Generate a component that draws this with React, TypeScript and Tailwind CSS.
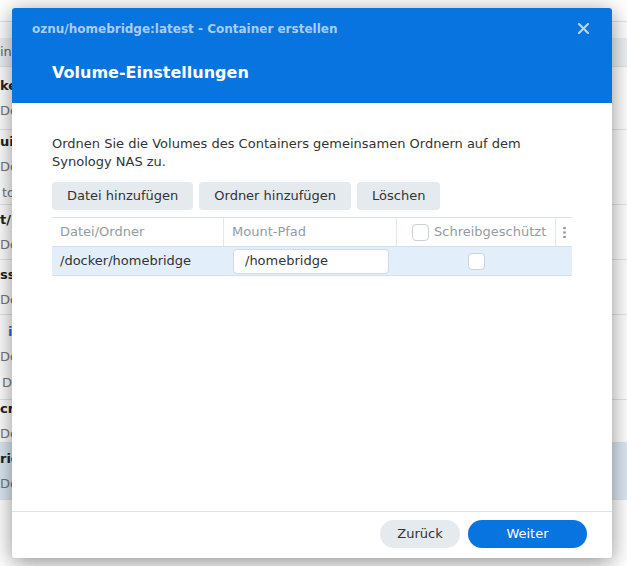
import React from 'react';

// Background list rows peeking out from behind the dialog
const BG_ROWS = [
  { h: 'h-[63px]', title: 'ke', subs: ['Do'], selected: false },
  { h: 'h-[75px]', title: 'ui', subs: ['Do', 'to'], selected: false },
  { h: 'h-[55px]', title: 't/', subs: ['Do'], selected: false },
  { h: 'h-[55px]', title: 'ss', subs: ['Do'], selected: false },
  { h: 'h-[85px]', title: 'i', subs: ['Do', 'D'], selected: false, blue: true },
  { h: 'h-[43px]', title: 'cr', subs: ['Do'], selected: false },
  { h: 'h-[57px]', title: 'rid', subs: ['Do'], selected: true },
];

function Checkbox() {
  return <span className="inline-block h-[17px] w-[17px] rounded-[4px] border border-[#c9d2da] bg-white" />;
}

export default function App() {
  return (
    <div className="relative h-[566px] w-[627px] overflow-hidden bg-white font-['DejaVu_Sans',sans-serif] text-[13px] text-[#333]">
      {/* Background window */}
      <div className="flex flex-col">
        <div className="h-[22px] border-b border-[#dfe4e8]" />
        <div className="h-[16px]" />
        <div className="flex h-[29px] items-center border-b border-[#dfe4e8] bg-[#eef1f4]">
          <span className="text-[#666]">in</span>
        </div>
        {BG_ROWS.map((r, i) => (
          <div
            key={i}
            className={`flex flex-col justify-center gap-[6px] border-b border-[#dfe4e8] ${r.h} ${r.selected ? 'bg-[#dce8f3]' : ''}`}
          >
            <span className={`font-bold ${r.blue ? 'ml-[8px] text-[#1d6fd1]' : 'text-[#222]'}`}>{r.title}</span>
            {r.subs.map((s, j) => (
              <span key={j} className={`text-[#777] ${j === 1 ? 'ml-[2px]' : ''}`}>{s}</span>
            ))}
          </div>
        ))}
      </div>

      {/* Dialog */}
      <div className="absolute left-[12px] top-[8px] flex h-[550px] w-[600px] flex-col overflow-hidden rounded-[3px] bg-white shadow-[0_4px_22px_rgba(0,0,0,0.45)]">
        <div className="flex h-[95px] flex-col bg-[#0874e0] px-[20px]">
          <div className="flex h-[40px] items-center justify-between pt-[1px]">
            <span className="text-[12px] font-bold text-[#a8cdf4]">oznu/homebridge:latest - Container erstellen</span>
            <svg width="11" height="11" viewBox="0 0 11 11" className="mr-[3px]">
              <path d="M1 1L10 10M10 1L1 10" stroke="#b9d7f6" strokeWidth="2" strokeLinecap="round" />
            </svg>
          </div>
          <div className="flex h-[50px] items-center pl-[20px]">
            <span className="text-[16px] font-bold text-white">Volume-Einstellungen</span>
          </div>
        </div>

        <div className="flex flex-1 flex-col px-[40px] pt-[32px]">
          <p className="leading-[18px]">
            Ordnen Sie die Volumes des Containers gemeinsamen Ordnern auf dem
            <br />
            Synology NAS zu.
          </p>
          <div className="mt-[11px] flex gap-[6px]">
            <button className="h-[28px] rounded-[4px] bg-[#e5eaee] px-[15px]">Datei hinzufügen</button>
            <button className="h-[28px] rounded-[4px] bg-[#e5eaee] px-[15px]">Ordner hinzufügen</button>
            <button className="h-[28px] rounded-[4px] bg-[#e5eaee] px-[15px]">Löschen</button>
          </div>

          <div className="mt-[7px] w-[520px] border-t border-[#d3dfe9]">
            <div className="flex h-[28px] items-center text-[#939ba3]">
              <div className="flex h-full w-[172px] items-center border-r border-[#e3e8ec] pl-[8px]">Datei/Ordner</div>
              <div className="flex h-full w-[173px] items-center border-r border-[#e3e8ec] pl-[8px]">Mount-Pfad</div>
              <div className="flex h-full w-[159px] items-center gap-[5px] border-r border-[#e3e8ec] pl-[15px]">
                <Checkbox />
                <span>Schreibgeschützt</span>
              </div>
              <div className="flex h-full flex-1 items-center justify-center">
                <svg width="3" height="11" viewBox="0 0 3 11">
                  <rect x="0.25" y="0" width="2.5" height="2.2" fill="#8e969e" />
                  <rect x="0.25" y="4.4" width="2.5" height="2.2" fill="#8e969e" />
                  <rect x="0.25" y="8.8" width="2.5" height="2.2" fill="#8e969e" />
                </svg>
              </div>
            </div>
            <div className="flex h-[30px] items-center border-b border-t border-[#d3dfe9] bg-[#e3eefb]">
              <div className="w-[172px] pl-[8px]">/docker/homebridge</div>
              <div className="w-[173px] pl-[9px]">
                <div className="flex h-[25px] w-[156px] items-center rounded-[4px] border border-[#d2dbe3] bg-white pl-[11px]">
                  /homebridge
                </div>
              </div>
              <div className="flex w-[159px] justify-center">
                <Checkbox />
              </div>
            </div>
          </div>
        </div>

        <div className="flex h-[47px] items-start justify-end gap-[8px] border-t border-[#dde5ec] pr-[25px] pt-[8px]">
          <button className="h-[28px] w-[80px] rounded-full bg-[#e5eaee] text-[#333]">Zurück</button>
          <button className="h-[28px] w-[119px] rounded-full bg-[#0874e0] text-white">Weiter</button>
        </div>
      </div>
    </div>
  );
}
